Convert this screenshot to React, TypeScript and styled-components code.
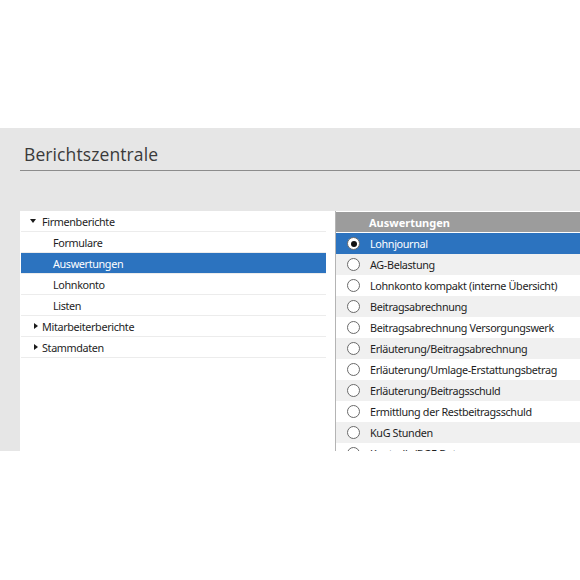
import React from "react";
import styled, { createGlobalStyle } from "styled-components";

const GlobalStyle = createGlobalStyle`
  html, body {
    margin: 0;
    padding: 0;
    background: #ffffff;
  }
  body {
    font-family: "Noto Sans", "Liberation Sans", sans-serif;
  }
`;

const Page = styled.div`
  width: 580px;
  height: 580px;
  padding-top: 128px;
  box-sizing: border-box;
  overflow: hidden;
`;

const Frame = styled.section`
  height: 323px;
  background: #e6e6e6;
  overflow: hidden;
  display: flex;
  flex-direction: column;
`;

const TitleBar = styled.header`
  margin-left: 20px;
  height: 43px;
  box-sizing: border-box;
  border-bottom: 1px solid #8c8c8c;
  padding: 15px 0 0 4px;
`;

const Title = styled.h1`
  margin: 0;
  font-family: "Open Sans", "Noto Sans", sans-serif;
  font-weight: 400;
  font-size: 17.5px;
  line-height: 22px;
  color: #3a3a3a;
  letter-spacing: 0.1px;
`;

const Content = styled.div`
  flex: 1;
  display: flex;
  margin: 40px 0 0 20px;
  min-height: 0;
`;

const TreePanel = styled.nav`
  width: 316px;
  flex-shrink: 0;
  box-sizing: border-box;
  background: #ffffff;
  border-right: 1px solid #b4b4b4;
  padding: 0 9px 0 1px;
`;

const TreeRow = styled.div<{ $level: number; $selected?: boolean }>`
  display: flex;
  align-items: center;
  height: 21px;
  box-sizing: border-box;
  border-bottom: 1px solid #ececec;
  padding-left: ${(p) => (p.$level === 0 ? 9 : 32)}px;
  font-size: 10.8px;
  letter-spacing: -0.35px;
  color: ${(p) => (p.$selected ? "#ffffff" : "#1e1e1e")};
  background: ${(p) => (p.$selected ? "#2c73bf" : "transparent")};
`;

const Arrow = styled.span<{ $open?: boolean }>`
  width: 12px;
  display: inline-flex;
  justify-content: ${(p) => (p.$open ? "flex-start" : "center")};
  &::before {
    content: "";
    display: block;
    ${(p) =>
      p.$open
        ? `border-left: 3.5px solid transparent;
           border-right: 3.5px solid transparent;
           border-top: 4px solid #1a1a1a;`
        : `border-top: 3.5px solid transparent;
           border-bottom: 3.5px solid transparent;
           border-left: 4px solid #1a1a1a;`}
  }
`;

const ListPanel = styled.div`
  flex: 1;
  background: #ffffff;
  padding-top: 1px;
  min-width: 0;
`;

const ListHeader = styled.div`
  height: 20px;
  display: flex;
  align-items: center;
  padding-left: 33px;
  background: #9c9c9c;
  color: #ffffff;
  font-weight: 700;
  font-size: 11px;
  border-bottom: 1px solid #ffffff;
`;

const ListRow = styled.div<{ $selected?: boolean; $shaded?: boolean }>`
  display: flex;
  align-items: center;
  height: 21px;
  padding-left: 11px;
  font-size: 10.8px;
  letter-spacing: -0.35px;
  white-space: nowrap;
  color: ${(p) => (p.$selected ? "#ffffff" : "#1e1e1e")};
  background: ${(p) =>
    p.$selected ? "#2c73bf" : p.$shaded ? "#f0f0f0" : "#ffffff"};
`;

const Radio = styled.span<{ $checked?: boolean }>`
  width: 11px;
  height: 11px;
  border-radius: 50%;
  border: 1px solid #6a6a6a;
  background: #ffffff;
  margin-right: 10px;
  display: inline-flex;
  align-items: center;
  justify-content: center;
  flex-shrink: 0;
  &::after {
    content: "";
    display: ${(p) => (p.$checked ? "block" : "none")};
    width: 6px;
    height: 6px;
    border-radius: 50%;
    background: #111111;
  }
`;

type TreeItem = { label: string; level: number; open?: boolean; selected?: boolean };

const treeItems: TreeItem[] = [
  { label: "Firmenberichte", level: 0, open: true },
  { label: "Formulare", level: 1 },
  { label: "Auswertungen", level: 1, selected: true },
  { label: "Lohnkonto", level: 1 },
  { label: "Listen", level: 1 },
  { label: "Mitarbeiterberichte", level: 0 },
  { label: "Stammdaten", level: 0 },
];

const reports = [
  "Lohnjournal",
  "AG-Belastung",
  "Lohnkonto kompakt (interne Übersicht)",
  "Beitragsabrechnung",
  "Beitragsabrechnung Versorgungswerk",
  "Erläuterung/Beitragsabrechnung",
  "Erläuterung/Umlage-Erstattungsbetrag",
  "Erläuterung/Beitragsschuld",
  "Ermittlung der Restbeitragsschuld",
  "KuG Stunden",
  "Kontrolle/BGF-Daten",
];

const App = () => {
  return (
    <>
      <GlobalStyle />
      <Page>
        <Frame>
          <TitleBar>
            <Title>Berichtszentrale</Title>
          </TitleBar>
          <Content>
            <TreePanel>
              {treeItems.map((item) => (
                <TreeRow key={item.label} $level={item.level} $selected={item.selected}>
                  {item.level === 0 && <Arrow $open={item.open} />}
                  {item.label}
                </TreeRow>
              ))}
            </TreePanel>
            <ListPanel>
              <ListHeader>Auswertungen</ListHeader>
              {reports.map((name, i) => (
                <ListRow key={name} $selected={i === 0} $shaded={i % 2 === 1}>
                  <Radio $checked={i === 0} />
                  {name}
                </ListRow>
              ))}
            </ListPanel>
          </Content>
        </Frame>
      </Page>
    </>
  );
};

export default App;
